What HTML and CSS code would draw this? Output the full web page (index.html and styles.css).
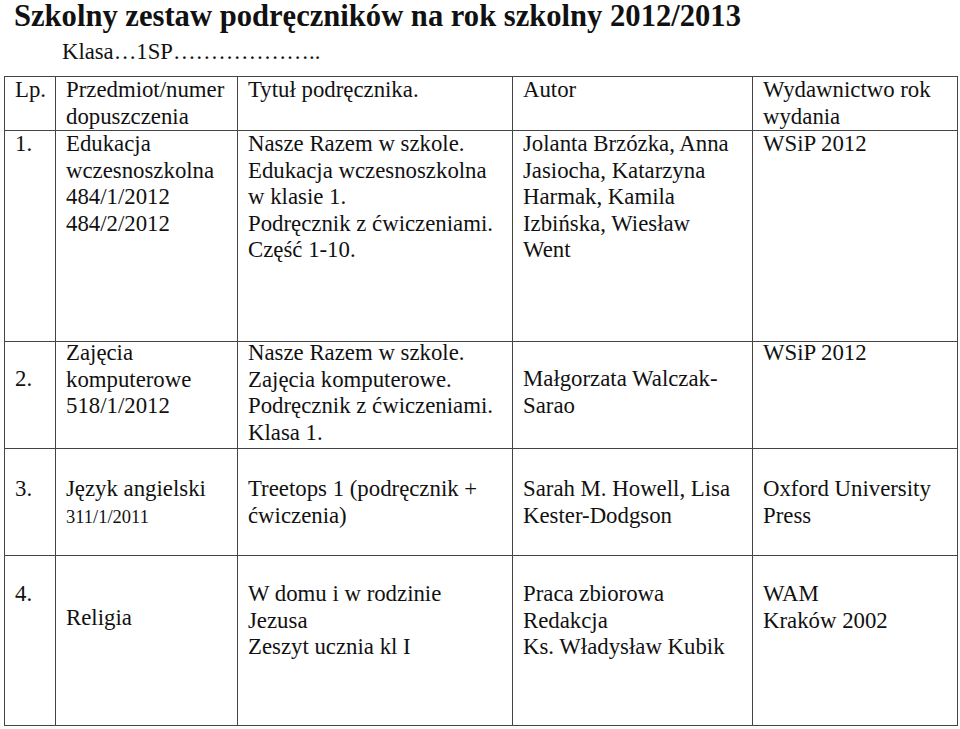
FILE: index.html
```html
<!DOCTYPE html>
<html lang="pl">
<head>
<meta charset="utf-8">
<title>Szkolny zestaw podręczników</title>
<link rel="stylesheet" href="styles.css">
</head>
<body>
<h1 class="title">Szkolny zestaw podręczników na rok szkolny 2012/2013</h1>
<p class="klasa">Klasa…1SP………………..</p>
<table class="books">
  <colgroup>
    <col class="c-lp"><col class="c-subj"><col class="c-title"><col class="c-author"><col class="c-pub">
  </colgroup>
  <tr class="r-head">
    <td>Lp.</td>
    <td>Przedmiot/numer<br>dopuszczenia</td>
    <td>Tytuł podręcznika.</td>
    <td>Autor</td>
    <td>Wydawnictwo rok<br>wydania</td>
  </tr>
  <tr class="r-1">
    <td>1.</td>
    <td>Edukacja<br>wczesnoszkolna<br>484/1/2012<br>484/2/2012</td>
    <td>Nasze Razem w szkole.<br>Edukacja wczesnoszkolna<br>w klasie 1.<br>Podręcznik z ćwiczeniami.<br>Część 1-10.</td>
    <td>Jolanta Brzózka, Anna<br>Jasiocha, Katarzyna<br>Harmak, Kamila<br>Izbińska, Wiesław<br>Went</td>
    <td>WSiP 2012</td>
  </tr>
  <tr class="r-2">
    <td class="p-line">2.</td>
    <td><div class="lift">Zajęcia<br>komputerowe<br>518/1/2012</div></td>
    <td><div class="lift">Nasze Razem w szkole.<br>Zajęcia komputerowe.<br>Podręcznik z ćwiczeniami.<br>Klasa 1.</div></td>
    <td class="p-line">Małgorzata Walczak-<br>Sarao</td>
    <td><div class="lift">WSiP 2012</div></td>
  </tr>
  <tr class="r-3">
    <td>3.</td>
    <td>Język angielski<br><span class="small">311/1/2011</span></td>
    <td>Treetops 1 (podręcznik +<br>ćwiczenia)</td>
    <td>Sarah M. Howell, Lisa<br>Kester-Dodgson</td>
    <td>Oxford University<br>Press</td>
  </tr>
  <tr class="r-4">
    <td>4.</td>
    <td class="p-religia">Religia</td>
    <td>W domu i w rodzinie<br>Jezusa<br>Zeszyt ucznia kl I</td>
    <td>Praca zbiorowa<br>Redakcja<br>Ks. Władysław Kubik</td>
    <td>WAM<br>Kraków 2002</td>
  </tr>
</table>
</body>
</html>
```
FILE: styles.css
```css
html, body {
  margin: 0;
  padding: 0;
  background: #ffffff;
  color: #111111;
  font-family: "Liberation Serif", "Times New Roman", serif;
}

.title {
  margin: 0 0 0 14px;
  font-size: 30.6px;
  font-weight: bold;
  line-height: 32px;
  height: 32px;
  white-space: nowrap;
}

.klasa {
  margin: 0 0 11px 62px;
  padding-top: 7px;
  font-size: 22.7px;
  line-height: 26px;
}

.books {
  margin-left: 4px;
  border-collapse: collapse;
  table-layout: fixed;
  width: 953px;
  font-size: 22.8px;
  line-height: 26.5px;
}

.c-lp { width: 51px; }
.c-subj { width: 182px; }
.c-title { width: 275px; }
.c-author { width: 240px; }
.c-pub { width: 205px; }

.books td {
  border: 1px solid #444444;
  vertical-align: top;
  padding: 0 2px 0 10px;
  white-space: nowrap;
}

.r-head { height: 54px; }
.r-1 { height: 211px; }
.r-2 { height: 106px; }
.r-3 { height: 107px; }
.r-3 td { padding-top: 27px; }
.r-4 { height: 170px; }
.r-4 td { padding-top: 25px; }

.books td.p-line { padding-top: 24px; }
.books td.p-religia { padding-top: 49px; }

.lift {
  margin-top: -2px;
  margin-bottom: 2px;
}

.small {
  font-size: 18.5px;
}
```
